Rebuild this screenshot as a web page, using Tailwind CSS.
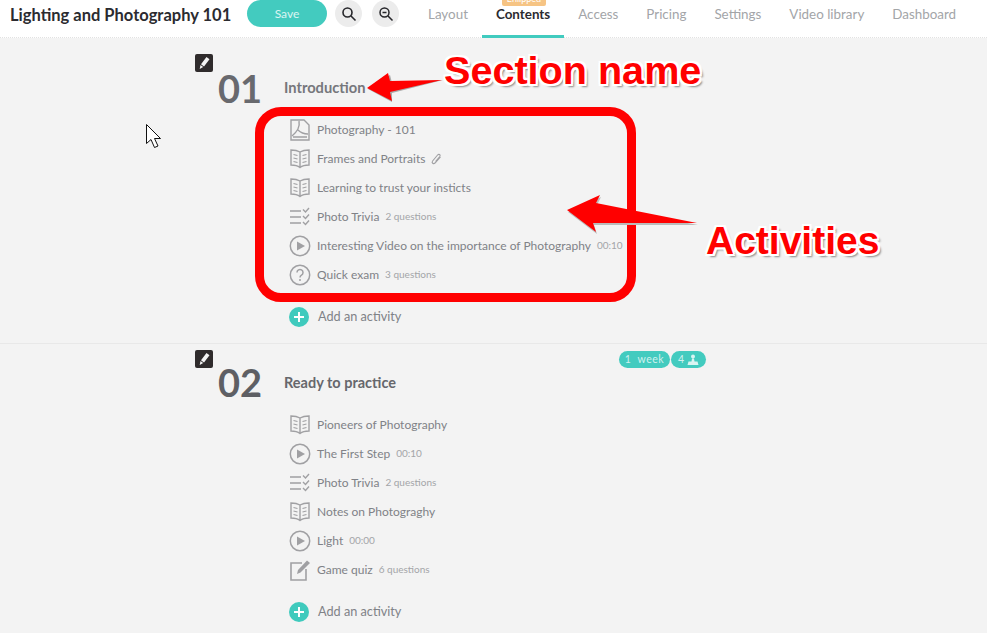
<!DOCTYPE html>
<html lang="en">
<head>
    <meta charset="UTF-8">
    <meta name="viewport" content="width=device-width, initial-scale=1.0">
    <title>Lighting and Photography 101</title>
    <script src="https://cdn.jsdelivr.net/npm/@tailwindcss/browser@4"></script>
</head>
<body class="bg-[#f3f3f3] font-['Lato',sans-serif] text-[#808287] overflow-hidden">

    <!-- icon set -->
    <svg class="hidden" xmlns="http://www.w3.org/2000/svg">
        <symbol id="i-pdf" viewBox="0 0 22 22">
            <path d="M2 1h13l5 5v15H2z" fill="none" stroke="currentColor" stroke-width="1.4"/>
            <path d="M10 2c1 5-1 10-7 15M9 11c3 3 6 4 10 4M4 18h14" fill="none" stroke="currentColor" stroke-width="1.4"/>
        </symbol>
        <symbol id="i-book" viewBox="0 0 22 22">
            <path d="M11 4C8.500 2.500 5 2 2 2v15c3 0 6.500.5 9 2.500 2.500-2 6-2.500 9-2.500V2c-3 0-6.500.5-9 2zM11 4v15.500" fill="none" stroke="currentColor" stroke-width="1.4"/>
            <path d="M4.500 6.500l4 1M4.500 10l4 1M4.500 13.500l4 1M17.500 6.500l-4 1M17.500 10l-4 1M17.500 13.500l-4 1" fill="none" stroke="currentColor" stroke-width="1.1"/>
        </symbol>
        <symbol id="i-list" viewBox="0 0 22 22">
            <path d="M1 5h11M1 11h11M1 17h11" fill="none" stroke="currentColor" stroke-width="1.5"/>
            <path d="M14 3.500l2.500 2.500L20 2M14 10l2.500 2.500L20 8.500M14 16l2.500 2.500L20 14.500" fill="none" stroke="currentColor" stroke-width="1.4"/>
        </symbol>
        <symbol id="i-play" viewBox="0 0 22 22">
            <circle cx="11" cy="11" r="9.700" fill="none" stroke="currentColor" stroke-width="1.5"/>
            <path d="M8 6.500l8 4.500-8 4.500z" fill="currentColor"/>
        </symbol>
        <symbol id="i-help" viewBox="0 0 22 22">
            <circle cx="11" cy="11" r="9.700" fill="none" stroke="currentColor" stroke-width="1.5"/>
            <path d="M8 8.500a3 3 0 1 1 4.500 2.600c-1 .6-1.500 1.100-1.500 2.400" fill="none" stroke="currentColor" stroke-width="1.500"/>
            <circle cx="11" cy="16" r="1" fill="currentColor"/>
        </symbol>
        <symbol id="i-note" viewBox="0 0 22 22">
            <path d="M13 4H2v17h15V10" fill="none" stroke="currentColor" stroke-width="1.600"/>
            <path d="M8 15l1-4L18 1.500l3 2.500-9.500 9.500z" fill="currentColor"/>
        </symbol>
        <symbol id="i-pencil" viewBox="0 0 18 18">
            <path d="M11.500 3l3 2.200-5.500 7.300-3-2.200zM5.500 11l2.700 2-3.500 2z" fill="#f4f4f4"/>
        </symbol>
    </svg>

    <header class="h-[38px] bg-white border-b border-dotted border-[#e2e2e2] flex items-start">
        <h1 class="ml-[10px] w-[237px] pt-[5px] text-[16.500px] leading-[20px] font-bold text-[#2b2b30] whitespace-nowrap">Lighting and Photography 101</h1>
        <button class="w-[80px] h-[27px] rounded-full bg-[#43cbbf] text-white/80 text-[12px]">Save</button>
        <button class="ml-[8px] w-[27px] h-[27px] rounded-full bg-[#ececec] flex items-center justify-center">
            <svg class="w-[16px] h-[16px]" viewBox="0 0 16 16" fill="none" stroke="#26262a" stroke-width="1.600"><circle cx="6.500" cy="6.500" r="4.500"/><path d="M10 10l4.500 4.500"/></svg>
        </button>
        <button class="ml-[10px] w-[27px] h-[27px] rounded-full bg-[#ececec] flex items-center justify-center">
            <svg class="w-[16px] h-[16px]" viewBox="0 0 16 16" fill="none" stroke="#26262a" stroke-width="1.500"><circle cx="6.500" cy="6.500" r="4.500"/><path d="M4.500 6.500h4M10 10l4.500 4.500"/></svg>
        </button>
        <nav class="ml-[15px] flex text-[13.400px] leading-[28px] text-[#a3a5a8] whitespace-nowrap">
            <a class="h-[37px] px-[14px]">Layout</a>
            <a class="relative h-[38px] px-[14px] font-bold text-[#2b2b30] border-b-[3px] border-[#41cbbf]">
                Contents
                <span class="absolute left-[20px] top-[-6px] w-[44px] h-[12px] rounded-[2px] bg-[#f6c484] text-white text-[9px] leading-[10px] text-center font-normal">Enlipped</span>
            </a>
            <a class="px-[14px]">Access</a>
            <a class="px-[14px]">Pricing</a>
            <a class="px-[14px]">Settings</a>
            <a class="px-[14px]">Video library</a>
            <a class="px-[14px]">Dashboard</a>
        </nav>
    </header>

    <main>
        <!-- Section 01 -->
        <section class="relative h-[306px] border-b border-[#e8e8e8]">
            <div class="ml-[195px] pt-[16px] flex">
                <span class="w-[18px] h-[18px] rounded-[2px] bg-[#2f2b2c] flex items-center justify-center"><svg class="w-[18px] h-[18px]"><use href="#i-pencil"/></svg></span>
                <span class="ml-[5px] mt-[15px] w-[66px] text-[38px] leading-[38px] font-bold text-[#68696e]">01</span>
                <h2 class="mt-[23px] text-[14.700px] leading-[20px] font-bold text-[#76777c]">Introduction</h2>
            </div>
            <ul class="ml-[289px] mt-[8px] text-[12px]">
                <li class="h-[29px] flex items-center"><svg class="w-[22px] h-[22px] text-[#a0a0a3]"><use href="#i-pdf"/></svg><span class="ml-[6px]">Photography - 101</span></li>
                <li class="h-[29px] flex items-center"><svg class="w-[22px] h-[22px] text-[#a0a0a3]"><use href="#i-book"/></svg><span class="ml-[6px]">Frames and Portraits</span>
                    <svg class="ml-[5px] w-[12px] h-[12px] text-[#a0a0a3]" viewBox="0 0 12 12" fill="none" stroke="currentColor" stroke-width="1.100"><path d="M10.500 4L5 10c-1.500 1.500-3.800-.2-2.400-2l5-6c1.200-1.400 3.300-.2 2.200 1.500L5.500 8.500"/></svg></li>
                <li class="h-[29px] flex items-center"><svg class="w-[22px] h-[22px] text-[#a0a0a3]"><use href="#i-book"/></svg><span class="ml-[6px]">Learning to trust your insticts</span></li>
                <li class="h-[29px] flex items-center"><svg class="w-[22px] h-[22px] text-[#a0a0a3]"><use href="#i-list"/></svg><span class="ml-[6px]">Photo Trivia</span><span class="ml-[6px] text-[10px] text-[#a3a5a8]">2 questions</span></li>
                <li class="h-[29px] flex items-center"><svg class="w-[22px] h-[22px] text-[#a0a0a3]"><use href="#i-play"/></svg><span class="ml-[6px]">Interesting Video on the importance of Photography</span><span class="ml-[6px] text-[10px] text-[#a3a5a8]">00:10</span></li>
                <li class="h-[29px] flex items-center"><svg class="w-[22px] h-[22px] text-[#a0a0a3]"><use href="#i-help"/></svg><span class="ml-[6px]">Quick exam</span><span class="ml-[6px] text-[10px] text-[#a3a5a8]">3 questions</span></li>
            </ul>
            <div class="ml-[289px] mt-[18px] flex items-center text-[12.700px]">
                <span class="w-[20px] h-[20px] rounded-full bg-[#3fcabd] flex items-center justify-center"><svg class="w-[12px] h-[12px]" viewBox="0 0 12 12" stroke="#fff" stroke-width="2"><path d="M6 1v10M1 6h10"/></svg></span>
                <span class="ml-[9px]">Add an activity</span>
            </div>
        </section>

        <!-- Section 02 -->
        <section class="relative">
            <div class="absolute left-[619px] top-[7px] flex gap-[1px] text-[10.500px] leading-[17px] text-white/75">
                <span class="w-[51px] h-[17px] rounded-full bg-[#43cbbf] text-center tracking-[0.5px]">1 &nbsp;week</span>
                <span class="w-[35px] h-[17px] rounded-full bg-[#43cbbf] flex items-center justify-center gap-[3px]">4
                    <svg class="w-[12px] h-[12px]" viewBox="0 0 12 12" fill="#ffffff" fill-opacity="0.8"><circle cx="6" cy="2.500" r="2"/><path d="M5 4.500h2l.5 3h3l1 3.500H.500l1-3.500h3z"/></svg>
                </span>
            </div>
            <div class="ml-[195px] pt-[6px] flex">
                <span class="w-[18px] h-[18px] rounded-[2px] bg-[#2f2b2c] flex items-center justify-center"><svg class="w-[18px] h-[18px]"><use href="#i-pencil"/></svg></span>
                <span class="ml-[5px] mt-[13px] w-[66px] text-[38px] leading-[38px] font-bold text-[#5e5f64]">02</span>
                <h2 class="mt-[23px] text-[14.500px] leading-[20px] font-bold text-[#66676c]">Ready to practice</h2>
            </div>
            <ul class="ml-[289px] mt-[9px] text-[12px]">
                <li class="h-[29px] flex items-center"><svg class="w-[22px] h-[22px] text-[#a0a0a3]"><use href="#i-book"/></svg><span class="ml-[6px]">Pioneers of Photography</span></li>
                <li class="h-[29px] flex items-center"><svg class="w-[22px] h-[22px] text-[#a0a0a3]"><use href="#i-play"/></svg><span class="ml-[6px]">The First Step</span><span class="ml-[6px] text-[10px] text-[#a3a5a8]">00:10</span></li>
                <li class="h-[29px] flex items-center"><svg class="w-[22px] h-[22px] text-[#a0a0a3]"><use href="#i-list"/></svg><span class="ml-[6px]">Photo Trivia</span><span class="ml-[6px] text-[10px] text-[#a3a5a8]">2 questions</span></li>
                <li class="h-[29px] flex items-center"><svg class="w-[22px] h-[22px] text-[#a0a0a3]"><use href="#i-book"/></svg><span class="ml-[6px]">Notes on Photograghy</span></li>
                <li class="h-[29px] flex items-center"><svg class="w-[22px] h-[22px] text-[#a0a0a3]"><use href="#i-play"/></svg><span class="ml-[6px]">Light</span><span class="ml-[6px] text-[10px] text-[#a3a5a8]">00:00</span></li>
                <li class="h-[29px] flex items-center"><svg class="w-[22px] h-[22px] text-[#a0a0a3]"><use href="#i-note"/></svg><span class="ml-[6px]">Game quiz</span><span class="ml-[6px] text-[10px] text-[#a3a5a8]">6 questions</span></li>
            </ul>
            <div class="ml-[289px] mt-[18px] flex items-center text-[12.700px]">
                <span class="w-[20px] h-[20px] rounded-full bg-[#3fcabd] flex items-center justify-center"><svg class="w-[12px] h-[12px]" viewBox="0 0 12 12" stroke="#fff" stroke-width="2"><path d="M6 1v10M1 6h10"/></svg></span>
                <span class="ml-[9px]">Add an activity</span>
            </div>
        </section>
    </main>

    <!-- annotations drawn over the screenshot -->
    <div class="absolute left-[255px] top-[107px] w-[381px] h-[195px] rounded-[26px] border-[9px] border-[#ff0000]"></div>
    <svg class="absolute left-0 top-0 w-[987px] h-[633px] pointer-events-none" viewBox="0 0 987 633">
        <polygon points="368,89 390,75 392,83 443,80 392,93 392,102" fill="#aaa" />
        <polygon points="367,88 388,73 390,81 442,80 390,92 392,101" fill="#ff0000"/>
        <polygon points="568,212 601,197 597,205 698,225 594,225 597,234" fill="#bbb"/>
        <polygon points="567,210 600,195 596,203 697,223 593,223 596,232" fill="#ff0000"/>
        <path d="M146.500 124.500v19l4.500-4 3.500 8 3.500-1.500-3.500-7.500h6z" fill="#fff" stroke="#111" stroke-width="1"/>
    </svg>
    <span class="absolute left-[444px] top-[48px] font-['Liberation_Sans',sans-serif] font-bold text-[39.600px] leading-[44px] text-[#ff0000] whitespace-nowrap [text-shadow:2px_0_0_#fff,-2px_0_0_#fff,0_2px_0_#fff,0_-2px_0_#fff,2px_2px_0_#fff,-2px_2px_0_#fff,2px_-2px_0_#fff,-2px_-2px_0_#fff,3px_3px_2px_#888]">Section name</span>
    <span class="absolute left-[706px] top-[219px] font-['Liberation_Sans',sans-serif] font-bold text-[39px] leading-[44px] text-[#ff0000] whitespace-nowrap [text-shadow:2px_0_0_#fff,-2px_0_0_#fff,0_2px_0_#fff,0_-2px_0_#fff,2px_2px_0_#fff,-2px_2px_0_#fff,2px_-2px_0_#fff,-2px_-2px_0_#fff,3px_3px_2px_#888]">Activities</span>

</body>
</html>
